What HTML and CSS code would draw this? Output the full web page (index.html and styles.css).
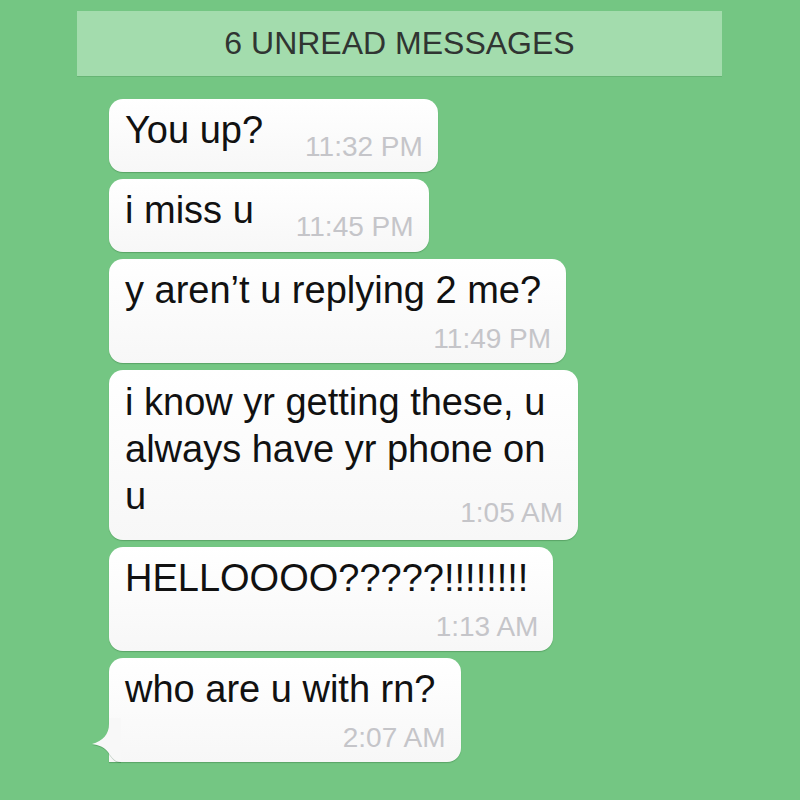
FILE: index.html
```html
<!DOCTYPE html>
<html lang="en">
<head>
<meta charset="utf-8">
<title>Unread messages</title>
<link rel="stylesheet" href="styles.css">
</head>
<body>
<div class="screen">
  <div class="banner">6 UNREAD MESSAGES</div>
  <div class="thread">
    <div class="bubble inline">
      <span class="text">You up?</span>
      <span class="time">11:32 PM</span>
    </div>
    <div class="bubble inline">
      <span class="text">i miss u</span>
      <span class="time">11:45 PM</span>
    </div>
    <div class="bubble stack">
      <div class="text">y aren’t u replying 2 me?</div>
      <div class="time">11:49 PM</div>
    </div>
    <div class="bubble multi">
      <div class="text">i know yr getting these, u always have yr phone on</div>
      <div class="last-line">
        <span class="text">u</span>
        <span class="time">1:05 AM</span>
      </div>
    </div>
    <div class="bubble stack">
      <div class="text">HELLOOOO?????!!!!!!!!</div>
      <div class="time">1:13 AM</div>
    </div>
    <div class="bubble stack tailed">
      <svg class="tail" width="30" height="44" viewBox="0 0 30 44" aria-hidden="true">
        <path d="M18 0 L18 6 C18 16 12 23 1 26 C8 27 13 29 17 34 C21 40 24 44 30 44 L30 0 Z" fill="#f8f8f8"/>
      </svg>
      <div class="text">who are u with rn?</div>
      <div class="time">2:07 AM</div>
    </div>
  </div>
</div>
</body>
</html>
```

FILE: styles.css
```css
html, body {
  margin: 0;
  padding: 0;
}

body {
  background: #74c683;
  font-family: "Liberation Sans", Arial, sans-serif;
  width: 800px;
  height: 800px;
  overflow: hidden;
}

.screen {
  display: flex;
  flex-direction: column;
  padding-top: 11px;
}

.banner {
  margin-left: 77px;
  width: 645px;
  height: 65px;
  line-height: 65px;
  background: #a3dcad;
  box-shadow: 0 1px 0 rgba(60, 130, 70, 0.25);
  text-align: center;
  font-size: 32px;
  color: #303532;
}

.thread {
  display: flex;
  flex-direction: column;
  align-items: flex-start;
  gap: 7px;
  margin-top: 23px;
  padding-left: 109px;
}

.bubble {
  position: relative;
  box-sizing: border-box;
  max-width: 469px;
  padding: 8px 15px 9px 16px;
  border-radius: 14px;
  background: linear-gradient(#ffffff, #f7f7f7);
  box-shadow: 0 1px 1px rgba(20, 80, 30, 0.28);
}

.text {
  font-size: 38px;
  line-height: 47px;
  color: #111111;
}

.time {
  font-size: 28px;
  line-height: 32px;
  color: #c5c5c9;
  white-space: nowrap;
}

.inline {
  display: flex;
  align-items: flex-end;
}

.inline .text {
  margin-bottom: 9px;
}

.inline .time {
  margin-left: 42px;
}

.stack {
  display: flex;
  flex-direction: column;
  padding-bottom: 8px;
}

.stack .text {
  margin-right: 10px;
}

.stack .time {
  margin-top: 9px;
  align-self: flex-end;
}

.multi {
  display: flex;
  flex-direction: column;
  padding-top: 9px;
  padding-bottom: 11px;
}

.last-line {
  display: flex;
  justify-content: space-between;
  align-items: flex-end;
}

.last-line .text {
  margin-bottom: 9px;
}

.tailed {
  border-bottom-left-radius: 0;
}

.tail {
  position: absolute;
  left: -18px;
  bottom: 0;
  filter: drop-shadow(0 1px 0.5px rgba(20, 80, 30, 0.25));
}
```
